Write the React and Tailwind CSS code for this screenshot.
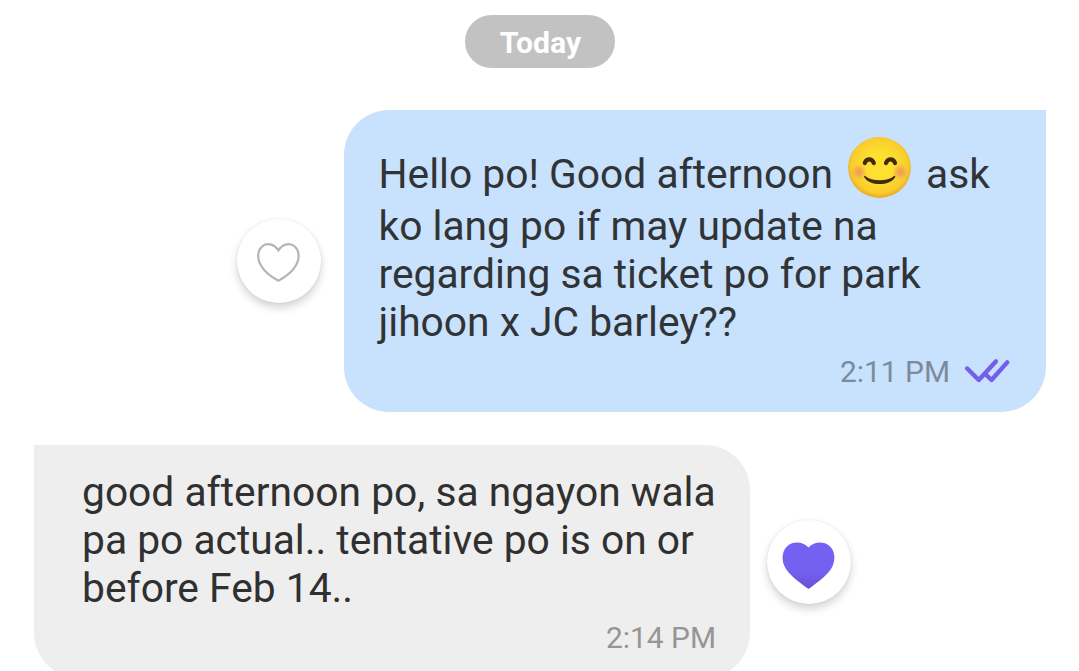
const HEART =
  'M27.5 7.5 C22.5 2 14 .8 8 4.8 C1 9.5 .2 19 3.4 26 C7 34 17 41.5 27.5 49 C38 41.5 48 34 51.6 26 C54.8 19 54 9.5 47 4.8 C41 .8 32.5 2 27.5 7.5 Z';

function SmileEmoji() {
  return (
    <svg viewBox="0 0 64 62" className="h-[62px] w-16 shrink-0" role="img" aria-label="😊">
      <defs>
        <radialGradient id="face" cx="0.5" cy="0.47" r="0.53">
          <stop offset="0.4" stopColor="#fde030" />
          <stop offset="0.85" stopColor="#f9cd2b" />
          <stop offset="1" stopColor="#eda62c" />
        </radialGradient>
        <radialGradient id="blush">
          <stop offset="0" stopColor="#f0806a" stopOpacity="0.75" />
          <stop offset="0.45" stopColor="#f0806a" stopOpacity="0.45" />
          <stop offset="1" stopColor="#f0806a" stopOpacity="0" />
        </radialGradient>
      </defs>
      <ellipse cx="31.5" cy="30.5" rx="31.4" ry="30.4" fill="url(#face)" />
      <circle cx="11" cy="35" r="8" fill="url(#blush)" />
      <circle cx="52.3" cy="35" r="8" fill="url(#blush)" />
      <path d="M16.8 26 C18.5 21.2 23.8 21.2 25.8 26" fill="none" stroke="#422b0d" strokeWidth="4.2" strokeLinecap="round" />
      <path d="M38 26 C40 21.2 45.2 21.2 47 26" fill="none" stroke="#422b0d" strokeWidth="4.2" strokeLinecap="round" />
      <path d="M17.3 39 C24 44.8 39.5 44.8 46 39 C47 38.2 47.6 39.2 47 40.4 C41.5 49.3 21.8 49.3 16.4 40.4 C15.7 39.2 16.3 38.2 17.3 39 Z" fill="#422b0d" />
    </svg>
  );
}

function ReactionButton({ className, children }) {
  return (
    <button
      className={`flex size-[84px] shrink-0 items-center justify-center rounded-full bg-white shadow-[0_5px_9px_rgba(0,0,0,0.17),0_0_3px_rgba(0,0,0,0.08)] ${className}`}
    >
      {children}
    </button>
  );
}

export default function App() {
  return (
    <main className="flex h-[671px] w-[1079px] flex-col overflow-hidden bg-white pt-[15px] font-[Roboto,sans-serif] text-[#303437]">
      <div className="flex h-[53px] w-[150px] shrink-0 items-center justify-center self-center rounded-full bg-[#c2c2c2] pt-[3px] pl-[2px] text-[30.2px] leading-none font-bold text-white">
        Today
      </div>

      <section className="mt-[42px] flex h-[302px] shrink-0 items-center justify-end pr-[33px]">
        <ReactionButton className="mr-[23px]">
          <svg viewBox="0 0 44 42" className="mt-[3px] h-[42px] w-11" fill="none" stroke="#b5b5b5" strokeWidth="2.2">
            <path d="M21.4 8.3 C17 1.8 9.5 .3 4.8 4.7 C.2 9 .2 16.5 3.4 22.5 C7 29.5 13.5 34.5 21.4 38.8 C29.3 34.5 35.8 29.5 39.4 22.5 C42.6 16.5 42.6 9 38 4.7 C33.3 .3 25.8 1.8 21.4 8.3 Z" />
          </svg>
        </ReactionButton>
        <article className="flex h-[302px] w-[702px] flex-col rounded-[45px] rounded-tr-none bg-[#c8e1fc] pt-[27px] pr-9 pl-[34.5px]">
          <div className="text-[40.75px] leading-[48px] whitespace-nowrap">
            <div className="flex h-[65px]">
              <span className="mt-[13px] w-[453.5px]">Hello po! Good afternoon</span>
              <span className="mr-[14px] ml-[16px]"><SmileEmoji /></span>
              <span className="mt-[13px]">ask</span>
            </div>
            <p>ko lang po if may update na</p>
            <p>regarding sa ticket po for park</p>
            <p>jihoon x JC barley??</p>
          </div>
          <div className="mt-2 flex items-center justify-end text-[29.9px] leading-9 text-[#7b8b9c]">
            <span>2:11 PM</span>
            <svg viewBox="0 0 46 26" className="ml-[14px] h-[26px] w-[46px]" fill="none" stroke="#7360e8" strokeWidth="4.4" strokeLinecap="round" strokeLinejoin="round">
              <path d="M3.2 9.5 L14.8 21 L31.8 2.4" />
              <path d="M22.8 16.5 L27.5 21 L43.2 3.4" />
            </svg>
          </div>
        </article>
      </section>

      <section className="mt-[33px] flex h-[233px] shrink-0 items-center pl-[34px]">
        <article className="flex h-[233px] w-[716px] flex-col rounded-[45px] rounded-tl-none bg-[#eee] pt-[23px] pr-[34px] pl-12 text-[#303030]">
          <div className="text-[40.75px] leading-[48px] whitespace-nowrap">
            <p>good afternoon po, sa ngayon wala</p>
            <p>pa po actual.. tentative po is on or</p>
            <p>before Feb 14..</p>
          </div>
          <time className="mt-2 self-end text-[29.9px] leading-9 text-[#959595]">2:14 PM</time>
        </article>
        <ReactionButton className="ml-[17px]">
          <svg viewBox="0 0 56 50" className="mt-[6px] h-[50px] w-14">
            <defs>
              <linearGradient id="heart" x1="0" y1="0" x2="0" y2="1">
                <stop offset="0.6" stopColor="#7560f2" />
                <stop offset="1" stopColor="#6653d4" />
              </linearGradient>
            </defs>
            <path d={HEART} fill="url(#heart)" />
          </svg>
        </ReactionButton>
      </section>
    </main>
  );
}
